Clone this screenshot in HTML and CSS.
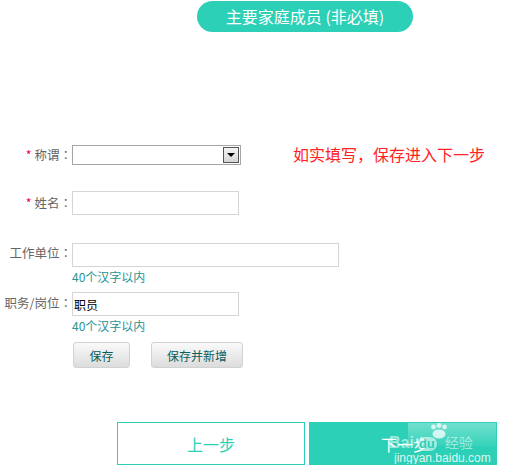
FILE: index.html
```html
<!DOCTYPE html>
<html lang="zh-CN">
<head>
  <meta charset="UTF-8">
  <title>主要家庭成员</title>
  <link rel="stylesheet" href="styles.css">
</head>
<body>
  <div class="page">
    <div class="title-pill">主要家庭成员 (非必填)</div>

    <div class="form">
      <div class="row row-title">
        <label class="label"><span class="req">*</span> 称谓<span class="colon" lang="ja">：</span></label>
        <div class="select-box">
          <span class="select-value"></span>
          <span class="select-arrow"></span>
        </div>
        <span class="tip">如实填写，保存进入下一步</span>
      </div>

      <div class="row row-name">
        <label class="label"><span class="req">*</span> 姓名<span class="colon" lang="ja">：</span></label>
        <input class="input input-short" type="text">
      </div>

      <div class="row row-company">
        <label class="label">工作单位<span class="colon" lang="ja">：</span></label>
        <div class="field">
          <input class="input input-long" type="text">
          <div class="hint">40个汉字以内</div>
        </div>
      </div>

      <div class="row row-job">
        <label class="label">职务/岗位<span class="colon" lang="ja">：</span></label>
        <div class="field">
          <input class="input input-short" type="text" value="职员">
          <div class="hint">40个汉字以内</div>
        </div>
      </div>

      <div class="actions">
        <button class="btn btn-save">保存</button>
        <button class="btn btn-add">保存并新增</button>
      </div>
    </div>

    <div class="steps">
      <button class="step step-prev">上一步</button>
      <button class="step step-next">
        <span class="step-text">下一步</span>
        <span class="watermark">
          <span class="wm-light"></span>
          <svg class="wm-paw" width="20" height="16" viewBox="0 0 20 16">
            <circle cx="4.5" cy="4" r="2.4" fill="rgba(255,255,255,0.75)"/>
            <circle cx="10" cy="2.5" r="2.4" fill="rgba(255,255,255,0.75)"/>
            <circle cx="15.5" cy="4" r="2.4" fill="rgba(255,255,255,0.75)"/>
            <ellipse cx="10" cy="11" rx="6.5" ry="4.5" fill="rgba(255,255,255,0.75)"/>
          </svg>
          <span class="wm-logo">Bai<span class="wm-du">du</span><span class="wm-cn">经验</span></span>
          <span class="wm-url">jingyan.baidu.com</span>
        </span>
      </button>
    </div>
  </div>
</body>
</html>
```

FILE: styles.css
```css
body {
  margin: 0;
  padding: 0;
  background-color: #fff;
  font-family: "Microsoft YaHei", "Noto Sans CJK SC", sans-serif;
}

.page {
  width: 512px;
  height: 476px;
  overflow: hidden;
}

.title-pill {
  margin: 1px 0 0 197px;
  width: 216px;
  height: 31px;
  border-radius: 16px;
  background-color: #2bd0b6;
  color: #fff;
  font-size: 16px;
  line-height: 31px;
  text-align: center;
}

.form {
  padding-top: 113px;
}

.row {
  display: flex;
  align-items: flex-start;
}

.label {
  width: 72px;
  text-align: right;
  font-size: 12.5px;
  color: #666;
  flex-shrink: 0;
}

.colon {
  font-family: "Noto Sans CJK JP", sans-serif;
}

.req {
  color: #f0003c;
}

.row-title .label {
  line-height: 20px;
}

.select-box {
  position: relative;
  width: 167px;
  height: 18px;
  border: 1px solid #a5a5a5;
  background-color: #fff;
}

.select-arrow {
  position: absolute;
  top: 1px;
  right: 1px;
  width: 14px;
  height: 14px;
  border: 1px solid #555;
  background: linear-gradient(#f4f4f4, #d6d6d6);
}

.select-arrow::after {
  content: "";
  position: absolute;
  left: 3px;
  top: 5px;
  border-left: 4px solid transparent;
  border-right: 4px solid transparent;
  border-top: 4px solid #000;
}

.tip {
  margin-left: 52px;
  font-size: 16px;
  line-height: 18px;
  color: #f22;
}

.row-name {
  margin-top: 26px;
}

.row-name .label {
  line-height: 24px;
}

.input {
  box-sizing: border-box;
  height: 24px;
  margin: 0;
  padding: 0 1px;
  border: 1px solid #d5d5d5;
  font-family: inherit;
  font-size: 12px;
  color: #000;
  outline: none;
}

.input-short {
  width: 167px;
}

.input-long {
  width: 267px;
}

.row-company {
  margin-top: 26px;
}

.row-company .label,
.row-job .label {
  line-height: 24px;
}

.row-job {
  margin-top: 7px;
}

.hint {
  margin-top: 3px;
  font-size: 12px;
  line-height: 14px;
  color: #2a9494;
}

.actions {
  display: flex;
  gap: 21px;
  margin: 9px 0 0 73px;
}

.btn {
  height: 26px;
  border: 1px solid #d2d2d2;
  border-radius: 3px;
  background: linear-gradient(#fafafa, #dcdcdc);
  color: #06605e;
  font-family: inherit;
  font-size: 12px;
  padding: 0;
}

.btn-save {
  width: 57px;
}

.btn-add {
  width: 92px;
}

.steps {
  display: flex;
  gap: 4px;
  margin: 54px 0 0 117px;
}

.step {
  box-sizing: border-box;
  width: 188px;
  height: 43px;
  border: 1px solid #2bd0b6;
  background-color: #fff;
  color: #2bd0b6;
  font-family: inherit;
  font-size: 16px;
  padding: 0;
}

.step-next {
  position: relative;
  overflow: hidden;
  background-color: #2bd0b6;
  color: #fff;
  text-align: left;
}

.step-text {
  margin-left: 71px;
}

.watermark {
  position: absolute;
  left: 76px;
  top: -1px;
  width: 112px;
  height: 43px;
  font-family: "Liberation Sans", "Noto Sans CJK SC", sans-serif;
}

.wm-light {
  position: absolute;
  left: 22px;
  top: 0;
  width: 90px;
  height: 24px;
  background: linear-gradient(rgba(255, 255, 255, 0.35), rgba(255, 255, 255, 0.05));
}

.wm-paw {
  position: absolute;
  left: 43px;
  top: 1px;
}

.wm-logo {
  position: absolute;
  left: 3px;
  top: 14px;
  font-size: 16px;
  font-weight: bold;
  line-height: 14px;
  color: rgba(255, 255, 255, 0.55);
}

.wm-du {
  display: inline-block;
  margin-left: 3px;
  padding: 0 2px;
  border-radius: 7px;
  background-color: rgba(255, 255, 255, 0.55);
  color: #2bd0b6;
  font-size: 13px;
  line-height: 14px;
}

.wm-cn {
  margin-left: 8px;
  font-size: 14px;
  font-weight: normal;
}

.wm-url {
  position: absolute;
  left: 8px;
  top: 30px;
  font-size: 12px;
  line-height: 12px;
  color: rgba(255, 255, 255, 0.85);
}
```
